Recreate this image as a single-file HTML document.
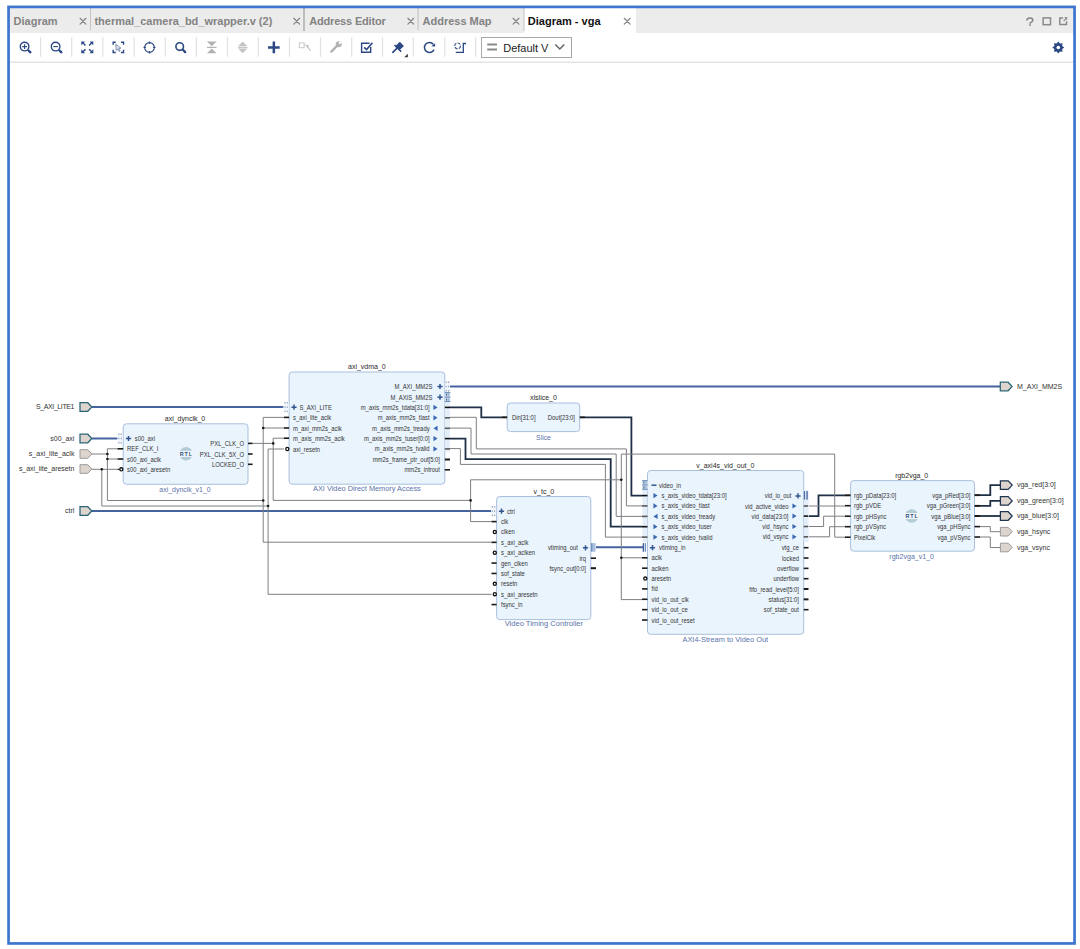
<!DOCTYPE html><html><head><meta charset="utf-8"><style>html,body{margin:0;padding:0;background:#fff;width:1080px;height:949px;overflow:hidden}svg{display:block;font-family:"Liberation Sans",sans-serif}</style></head><body>
<svg width="1080" height="949" viewBox="0 0 1080 949">
<rect x="0" y="0" width="1080" height="949" fill="#ffffff"/>
<rect x="9" y="8" width="1066" height="25" fill="#ececec"/>
<rect x="524" y="8" width="112" height="25" fill="#ffffff"/>
<rect x="9" y="61.5" width="1066" height="1.5" fill="#e4e4e4"/>
<text x="13.6" y="25" font-size="11" text-anchor="start" fill="#838383" font-weight="bold" >Diagram</text>
<text x="94.4" y="25" font-size="11" text-anchor="start" fill="#838383" font-weight="bold" >thermal_camera_bd_wrapper.v (2)</text>
<text x="309.2" y="25" font-size="11" text-anchor="start" fill="#838383" font-weight="bold" textLength="76.6">Address Editor</text>
<text x="422.5" y="25" font-size="11" text-anchor="start" fill="#838383" font-weight="bold" >Address Map</text>
<text x="527.8" y="25" font-size="11" text-anchor="start" fill="#111111" font-weight="bold" >Diagram - vga</text>
<path d="M80.1,18.3 L85.9,24.099999999999998 M85.9,18.3 L80.1,24.099999999999998" stroke="#838383" stroke-width="1.25" fill="none" stroke-linecap="round"/>
<path d="M293.8,18.3 L299.59999999999997,24.099999999999998 M299.59999999999997,18.3 L293.8,24.099999999999998" stroke="#838383" stroke-width="1.25" fill="none" stroke-linecap="round"/>
<path d="M407.90000000000003,18.3 L413.7,24.099999999999998 M413.7,18.3 L407.90000000000003,24.099999999999998" stroke="#838383" stroke-width="1.25" fill="none" stroke-linecap="round"/>
<path d="M513.1,18.3 L518.9,24.099999999999998 M518.9,18.3 L513.1,24.099999999999998" stroke="#838383" stroke-width="1.25" fill="none" stroke-linecap="round"/>
<path d="M624.3000000000001,18.3 L630.1,24.099999999999998 M630.1,18.3 L624.3000000000001,24.099999999999998" stroke="#838383" stroke-width="1.25" fill="none" stroke-linecap="round"/>
<rect x="90" y="8" width="1" height="22" fill="#c4c4c4"/>
<rect x="303" y="8" width="2" height="23" fill="#bdbdbd"/>
<rect x="417.4" y="8" width="1.3" height="22" fill="#c8c8c8"/>
<rect x="523.5" y="8" width="1" height="23" fill="#c4c4c4"/>
<path d="M1026.8,20.5 C1026.8,17.2 1032.8,17.2 1032.8,20.2 C1032.8,22.3 1030,22 1030,23.7" fill="none" stroke="#878787" stroke-width="1.6"/><rect x="1029.2" y="24.3" width="1.7" height="1.6" fill="#878787"/>
<rect x="1043.1" y="17.9" width="7.4" height="6.8" fill="none" stroke="#8a8a8a" stroke-width="1.5"/>
<path d="M1063.2,17.9 H1059.8 V24.6 H1066.5 V21.2" fill="none" stroke="#8a8a8a" stroke-width="1.5"/><path d="M1063.6,21.2 L1066.2,18.4" stroke="#8a8a8a" stroke-width="1.1"/><path d="M1067.2,17 L1067.2,20.2 L1064.2,17.2 Z" fill="#8a8a8a"/>
<rect x="40.0" y="37.2" width="1.2" height="19.6" fill="#e2e2e2"/>
<rect x="71.10000000000001" y="37.2" width="1.2" height="19.6" fill="#e2e2e2"/>
<rect x="102.2" y="37.2" width="1.2" height="19.6" fill="#e2e2e2"/>
<rect x="133.6" y="37.2" width="1.2" height="19.6" fill="#e2e2e2"/>
<rect x="164.70000000000002" y="37.2" width="1.2" height="19.6" fill="#e2e2e2"/>
<rect x="195.70000000000002" y="37.2" width="1.2" height="19.6" fill="#e2e2e2"/>
<rect x="226.9" y="37.2" width="1.2" height="19.6" fill="#e2e2e2"/>
<rect x="257.7" y="37.2" width="1.2" height="19.6" fill="#e2e2e2"/>
<rect x="288.9" y="37.2" width="1.2" height="19.6" fill="#e2e2e2"/>
<rect x="319.9" y="37.2" width="1.2" height="19.6" fill="#e2e2e2"/>
<rect x="351.09999999999997" y="37.2" width="1.2" height="19.6" fill="#e2e2e2"/>
<rect x="381.9" y="37.2" width="1.2" height="19.6" fill="#e2e2e2"/>
<rect x="412.7" y="37.2" width="1.2" height="19.6" fill="#e2e2e2"/>
<rect x="444.2" y="37.2" width="1.2" height="19.6" fill="#e2e2e2"/>
<rect x="475.09999999999997" y="37.2" width="1.2" height="19.6" fill="#e2e2e2"/>
<circle cx="24.6" cy="46.6" r="4.3" fill="none" stroke="#2b4883" stroke-width="1.4"/><path d="M22.3,46.6 H26.9 M24.6,44.3 V48.9" stroke="#2b4883" stroke-width="1.1"/><path d="M28.6,50.6 L30.4,52.3" stroke="#2b4883" stroke-width="2.3" stroke-linecap="round"/>
<circle cx="55.6" cy="46.6" r="4.3" fill="none" stroke="#2b4883" stroke-width="1.4"/><path d="M53.3,46.6 H57.9" stroke="#2b4883" stroke-width="1.1"/><path d="M59.6,50.6 L61.4,52.3" stroke="#2b4883" stroke-width="2.3" stroke-linecap="round"/>
<g stroke="#2b4883" stroke-width="1.4" fill="none"><path d="M82.8,42.85 L85.5,45.550000000000004 M91.8,42.85 L89.1,45.550000000000004 M82.8,51.85 L85.5,49.15 M91.8,51.85 L89.1,49.15"/></g>
<g fill="#2b4883"><path d="M81.3,41.550000000000004 h3.8 l-3.8,3.8z M93.3,41.550000000000004 h-3.8 l3.8,3.8z M81.3,53.15 h3.8 l-3.8,-3.8z M93.3,53.15 h-3.8 l3.8,-3.8z"/></g>
<path d="M113.14999999999999,44.85 V42.25 H115.75 M120.94999999999999,42.25 H123.55 V44.85 M123.55,49.85 V52.45 H120.94999999999999 M115.75,52.45 H113.14999999999999 V49.85" stroke="#2b4883" stroke-width="1.4" fill="none"/><path d="M115.75,44.15 L120.94999999999999,48.15 L118.75,48.45 L120.14999999999999,50.95 L119.14999999999999,51.45 L117.85,49.050000000000004 L116.14999999999999,50.35 Z" fill="#dde3ee" stroke="#5d7299" stroke-width="0.7"/>
<circle cx="149.5" cy="47.4" r="4.8" fill="none" stroke="#2b4883" stroke-width="1.1"/><path d="M149.5,41.4 V43.8 M149.5,51.0 V53.4 M143.5,47.4 H145.9 M153.1,47.4 H155.5" stroke="#2b4883" stroke-width="1.3"/>
<circle cx="179.7" cy="46.6" r="3.8" fill="none" stroke="#2b4883" stroke-width="1.6"/><path d="M182.9,49.8 L185.2,52.1" stroke="#2b4883" stroke-width="2.3" stroke-linecap="round"/>
<path d="M206.95,47.4 H216.55" stroke="#b3b3b3" stroke-width="1.2"/><path d="M206.95,41.6 H216.55 L211.75,46.2 Z M206.95,53.2 H216.55 L211.75,48.6 Z" fill="#b3b3b3"/>
<path d="M238.0,47.4 H247.39999999999998" stroke="#c8c8c8" stroke-width="1.2"/><path d="M238.0,46.3 H247.39999999999998 L242.7,41.6 Z M238.0,48.5 H247.39999999999998 L242.7,53.2 Z" fill="#c4c4c4"/>
<path d="M268.05,47.4 H279.65000000000003 M273.85,41.6 V53.199999999999996" stroke="#2b4883" stroke-width="2.5"/>
<rect x="299.3" y="42.9" width="4.8" height="4.8" fill="none" stroke="#c8c8c8" stroke-width="1"/><path d="M304.1,45.3 L306.3,44.9" stroke="#c8c8c8" stroke-width="1"/><path d="M306.5,45.5 L310.6,50.8" stroke="#bdbdbd" stroke-width="1.1"/><path d="M306.3,44.9 L309.2,45.6 L307.1,47.7 Z" fill="#bdbdbd"/>
<path d="M331.3,51.6 L337.5,45.4" stroke="#b3b3b3" stroke-width="2.4" stroke-linecap="round"/><circle cx="338.7" cy="44.2" r="3" fill="#b3b3b3"/><path d="M339.8,40.8 L341.6,42.6 L340.2,44.3 L338.4,43.3 Z" fill="#fff"/>
<path d="M369.5,43.2 H361.6 V52.2 H370.7 V47" fill="none" stroke="#2b4883" stroke-width="1.4"/><path d="M364.1,47.3 L366.6,49.6 L372.4,42.8" fill="none" stroke="#2b4883" stroke-width="1.6"/>
<path d="M392.8,52.4 L396.6,48.6" stroke="#2b4883" stroke-width="1.6" stroke-linecap="round"/><path d="M395,46.4 L399.8,41.8 L403.9,45.9 L399.2,50.6 Z" fill="#2b4883"/><path d="M394.5,45 L401.2,51.6" stroke="#2b4883" stroke-width="1.5"/><path d="M404.3,57.3 H407.8 V53.8 Z" fill="#333"/>
<path d="M433.3,44.2 A5,5 0 1 0 434,49.6" fill="none" stroke="#2b4883" stroke-width="1.5"/><path d="M435.2,43.2 L435.1,46.6 L431.3,46.2 Z" fill="#2b4883"/>
<circle cx="457.6" cy="45.9" r="2.9" fill="none" stroke="#3f5a8a" stroke-width="1.2" stroke-dasharray="3.2,1.2"/><path d="M455.8,52.4 H463.3 V43.5 H466" fill="none" stroke="#2b4883" stroke-width="1.3"/>
<rect x="481.5" y="37.5" width="90" height="20" fill="#fff" stroke="#a8a8a8" stroke-width="1"/>
<rect x="487.2" y="43.5" width="9.8" height="2" fill="#8a8a8a"/><rect x="487.2" y="48.5" width="9.8" height="2" fill="#8a8a8a"/>
<text x="503.2" y="52" font-size="11" text-anchor="start" fill="#222222" font-weight="normal" >Default V</text>
<path d="M555.3,44.5 L559.8,49 L564.3,44.5" fill="none" stroke="#666" stroke-width="1.5"/>
<path d="M1058.30,41.50 L1059.91,43.62 L1062.54,43.26 L1062.18,45.89 L1064.30,47.50 L1062.18,49.11 L1062.54,51.74 L1059.91,51.38 L1058.30,53.50 L1056.69,51.38 L1054.06,51.74 L1054.42,49.11 L1052.30,47.50 L1054.42,45.89 L1054.06,43.26 L1056.69,43.62 Z" fill="#2b4883"/><circle cx="1058.3" cy="47.5" r="1.8" fill="#fff"/>
<path d="M91.7,407.1 L283.4,407.1" fill="none" stroke="#44639f" stroke-width="2"/>
<path d="M450,386.4 L1000.3,386.4" fill="none" stroke="#44639f" stroke-width="2"/>
<path d="M91.7,438.5 L117.5,438.5" fill="none" stroke="#44639f" stroke-width="2"/>
<path d="M91.7,511.05 L491,511.05" fill="none" stroke="#44639f" stroke-width="2"/>
<path d="M596,547.3 L643,547.3" fill="none" stroke="#44639f" stroke-width="2"/>
<path d="M450,407.4 L481.3,407.4 L481.3,417.3 L502,417.3" fill="none" stroke="#1f2f45" stroke-width="1.8"/>
<path d="M450,438.6 L465.5,438.6 L465.5,459.1 L610.7,459.1 L610.7,526.7 L642,526.7" fill="none" stroke="#1f2f45" stroke-width="1.8"/>
<path d="M585,417.3 L631.4,417.3 L631.4,495.6 L642,495.6" fill="none" stroke="#1f2f45" stroke-width="1.8"/>
<path d="M808,516.1 L818.5,516.1 L818.5,495.3 L845,495.3" fill="none" stroke="#1f2f45" stroke-width="1.8"/>
<path d="M980,495.1 L990.3,495.1 L990.3,485.1 L1000.4,485.1" fill="none" stroke="#1f2f45" stroke-width="1.8"/>
<path d="M980,505.9 L990.3,505.9 L990.3,500.9 L1000.4,500.9" fill="none" stroke="#1f2f45" stroke-width="1.8"/>
<path d="M980,516 L1000.4,516" fill="none" stroke="#1f2f45" stroke-width="1.8"/>
<path d="M450,417.3 L476.3,417.3 L476.3,448.9 L626.4,448.9 L626.4,505.9 L642,505.9" fill="none" stroke="#7e7e84" stroke-width="1"/>
<path d="M450,428.1 L471,428.1 L471,454 L616.2,454 L616.2,516.4 L642,516.4" fill="none" stroke="#7e7e84" stroke-width="1"/>
<path d="M450,448.6 L460.4,448.6 L460.4,464.4 L605.4,464.4 L605.4,537.1 L642,537.1" fill="none" stroke="#7e7e84" stroke-width="1"/>
<path d="M808,506 L845,506" fill="none" stroke="#7e7e84" stroke-width="1"/>
<path d="M808,526.5 L823.6,526.5 L823.6,516.2 L845,516.2" fill="none" stroke="#7e7e84" stroke-width="1"/>
<path d="M808,536.8 L829.6,536.8 L829.6,526.7 L845,526.7" fill="none" stroke="#7e7e84" stroke-width="1"/>
<path d="M845,537.2 L834.7,537.2 L834.7,454.1 L621.3,454.1 L621.3,599.6 L642,599.6" fill="none" stroke="#7e7e84" stroke-width="1"/>
<path d="M470.6,479.8 L621.3,479.8" fill="none" stroke="#7e7e84" stroke-width="1"/>
<path d="M470.6,479.8 L470.6,521.6 L491.5,521.6" fill="none" stroke="#7e7e84" stroke-width="1"/>
<path d="M621.3,557.8 L642,557.8" fill="none" stroke="#7e7e84" stroke-width="1"/>
<path d="M980,526.6 L990.3,526.6 L990.3,531.7 L1000.4,531.7" fill="none" stroke="#7e7e84" stroke-width="1"/>
<path d="M980,537 L990.3,537 L990.3,547.5 L1000.4,547.5" fill="none" stroke="#7e7e84" stroke-width="1"/>
<path d="M91.7,454 L107.4,454" fill="none" stroke="#7e7e84" stroke-width="1"/>
<path d="M117.5,448.8 L107.4,448.8 L107.4,500.5 L263.2,500.5" fill="none" stroke="#7e7e84" stroke-width="1"/>
<path d="M107.4,459 L117.5,459" fill="none" stroke="#7e7e84" stroke-width="1"/>
<path d="M91.7,469.3 L117.5,469.3" fill="none" stroke="#7e7e84" stroke-width="1"/>
<path d="M101.8,469.3 L101.8,506 L268.1,506" fill="none" stroke="#7e7e84" stroke-width="1"/>
<path d="M284,417.4 L263.2,417.4 L263.2,542.2 L491.5,542.2" fill="none" stroke="#7e7e84" stroke-width="1"/>
<path d="M263.2,428 L284,428" fill="none" stroke="#7e7e84" stroke-width="1"/>
<path d="M284,449 L268.1,449 L268.1,594.3 L491.5,594.3" fill="none" stroke="#7e7e84" stroke-width="1"/>
<path d="M284,438.2 L273.2,438.2 L273.2,500.4 L470.6,500.4" fill="none" stroke="#7e7e84" stroke-width="1"/>
<path d="M252.6,443.4 L273.2,443.4" fill="none" stroke="#7e7e84" stroke-width="1"/>
<circle cx="107.4" cy="454" r="1.3" fill="#1a1a1a"/>
<circle cx="107.4" cy="459" r="1.3" fill="#1a1a1a"/>
<circle cx="101.8" cy="469.3" r="1.3" fill="#1a1a1a"/>
<circle cx="263.2" cy="500.5" r="1.3" fill="#1a1a1a"/>
<circle cx="268.1" cy="506" r="1.3" fill="#1a1a1a"/>
<circle cx="263.2" cy="428" r="1.3" fill="#1a1a1a"/>
<circle cx="273.2" cy="443.4" r="1.3" fill="#1a1a1a"/>
<circle cx="470.6" cy="500.4" r="1.3" fill="#1a1a1a"/>
<circle cx="621.3" cy="479.8" r="1.3" fill="#1a1a1a"/>
<circle cx="621.3" cy="557.8" r="1.3" fill="#1a1a1a"/>
<path d="M80.00,402.70 L87.80,402.70 L91.80,407.00 L87.80,411.30 L80.00,411.30 Z" fill="#ddd4cd" stroke="#2c6577" stroke-width="1.25"/>
<text x="74.4" y="409.3" font-size="7" text-anchor="end" fill="#333333" font-weight="normal" textLength="38.3">S_AXI_LITE1</text>
<path d="M80.00,434.20 L87.80,434.20 L91.80,438.50 L87.80,442.80 L80.00,442.80 Z" fill="#ddd4cd" stroke="#2c6577" stroke-width="1.25"/>
<text x="74.4" y="440.8" font-size="7" text-anchor="end" fill="#333333" font-weight="normal" >s00_axi</text>
<path d="M80.00,449.70 L87.80,449.70 L91.80,454.00 L87.80,458.30 L80.00,458.30 Z" fill="#ddd4cd" stroke="#9a9a9a" stroke-width="1"/>
<text x="74.4" y="456.3" font-size="7" text-anchor="end" fill="#333333" font-weight="normal" >s_axi_lite_aclk</text>
<path d="M80.00,464.70 L87.80,464.70 L91.80,469.00 L87.80,473.30 L80.00,473.30 Z" fill="#ddd4cd" stroke="#9a9a9a" stroke-width="1"/>
<text x="74.4" y="471.3" font-size="7" text-anchor="end" fill="#333333" font-weight="normal" textLength="55.5">s_axi_lite_aresetn</text>
<path d="M80.00,506.70 L87.80,506.70 L91.80,511.00 L87.80,515.30 L80.00,515.30 Z" fill="#ddd4cd" stroke="#2c6577" stroke-width="1.25"/>
<text x="74.4" y="513.3" font-size="7" text-anchor="end" fill="#333333" font-weight="normal" >ctrl</text>
<path d="M1000.30,382.20 L1008.10,382.20 L1012.10,386.50 L1008.10,390.80 L1000.30,390.80 Z" fill="#ddd4cd" stroke="#2c6577" stroke-width="1.25"/>
<text x="1017" y="388.8" font-size="7" text-anchor="start" fill="#333333" font-weight="normal" >M_AXI_MM2S</text>
<path d="M1000.40,480.80 L1008.20,480.80 L1012.20,485.10 L1008.20,489.40 L1000.40,489.40 Z" fill="#ddd4cd" stroke="#1f3550" stroke-width="1.25"/>
<text x="1016.9" y="487.4" font-size="7" text-anchor="start" fill="#333333" font-weight="normal" >vga_red[3:0]</text>
<path d="M1000.40,496.60 L1008.20,496.60 L1012.20,500.90 L1008.20,505.20 L1000.40,505.20 Z" fill="#ddd4cd" stroke="#1f3550" stroke-width="1.25"/>
<text x="1016.9" y="503.2" font-size="7" text-anchor="start" fill="#333333" font-weight="normal" >vga_green[3:0]</text>
<path d="M1000.40,511.70 L1008.20,511.70 L1012.20,516.00 L1008.20,520.30 L1000.40,520.30 Z" fill="#ddd4cd" stroke="#1f3550" stroke-width="1.25"/>
<text x="1016.9" y="518.3" font-size="7" text-anchor="start" fill="#333333" font-weight="normal" >vga_blue[3:0]</text>
<path d="M1000.40,527.40 L1008.20,527.40 L1012.20,531.70 L1008.20,536.00 L1000.40,536.00 Z" fill="#ddd4cd" stroke="#9a9a9a" stroke-width="1"/>
<text x="1016.9" y="534" font-size="7" text-anchor="start" fill="#333333" font-weight="normal" >vga_hsync</text>
<path d="M1000.40,543.20 L1008.20,543.20 L1012.20,547.50 L1008.20,551.80 L1000.40,551.80 Z" fill="#ddd4cd" stroke="#9a9a9a" stroke-width="1"/>
<text x="1016.9" y="549.8" font-size="7" text-anchor="start" fill="#333333" font-weight="normal" >vga_vsync</text>
<rect x="123.2" y="423.8" width="124.8" height="60.5" rx="3.2" ry="3.2" fill="#eaf4fd" stroke="#a9c0dd" stroke-width="1"/>
<text x="185" y="421.3" font-size="7" text-anchor="middle" fill="#2a2a2a" font-weight="normal" >axi_dynclk_0</text>
<text x="185" y="491.5" font-size="7.4" text-anchor="middle" fill="#5a73aa" font-weight="normal" textLength="51.4" lengthAdjust="spacingAndGlyphs">axi_dynclk_v1_0</text>
<rect x="117.7" y="433.5" width="5" height="10" fill="#f1f6fc"/>
<rect x="118.35000000000001" y="433.5" width="1.1" height="1.4" fill="#8d9db6"/>
<rect x="118.35000000000001" y="437.8" width="1.1" height="1.4" fill="#8d9db6"/>
<rect x="118.35000000000001" y="442.1" width="1.1" height="1.4" fill="#8d9db6"/>
<rect x="120.65" y="433.5" width="1.1" height="1.4" fill="#8d9db6"/>
<rect x="120.65" y="437.8" width="1.1" height="1.4" fill="#8d9db6"/>
<rect x="120.65" y="442.1" width="1.1" height="1.4" fill="#8d9db6"/>
<path d="M125.9,438.5 H131.1 M128.5,435.9 V441.1" stroke="#34568f" stroke-width="1.5" fill="none"/>
<text x="134.8" y="441.0" font-size="6.5" text-anchor="start" fill="#333333" font-weight="normal"  textLength="20.27" lengthAdjust="spacingAndGlyphs">s00_axi</text>
<text x="127" y="451.3" font-size="6.5" text-anchor="start" fill="#333333" font-weight="normal"  textLength="31.37" lengthAdjust="spacingAndGlyphs">REF_CLK_I</text>
<text x="127" y="461.5" font-size="6.5" text-anchor="start" fill="#333333" font-weight="normal"  textLength="33.99" lengthAdjust="spacingAndGlyphs">s00_axi_aclk</text>
<text x="127" y="471.8" font-size="6.5" text-anchor="start" fill="#333333" font-weight="normal"  textLength="43.15" lengthAdjust="spacingAndGlyphs">s00_axi_aresetn</text>
<line x1="117.5" y1="448.8" x2="123.2" y2="448.8" stroke="#1a1a1a" stroke-width="1.6"/>
<line x1="117.5" y1="459" x2="123.2" y2="459" stroke="#1a1a1a" stroke-width="1.6"/>
<circle cx="121.3" cy="469.3" r="1.55" fill="#fff" stroke="#111" stroke-width="1.3"/>
<line x1="117.5" y1="469.3" x2="119" y2="469.3" stroke="#1a1a1a" stroke-width="1.2"/>
<circle cx="186" cy="453.8" r="6.7" fill="#b3cbd6"/>
<rect x="179" y="450.8" width="14" height="6.1" fill="#eef6fb"/>
<text x="179.8" y="455.90000000000003" font-size="5.4" fill="#34507e" font-weight="bold" textLength="12.3" lengthAdjust="spacing">RTL</text>
<text x="244" y="445.9" font-size="6.5" text-anchor="end" fill="#333333" font-weight="normal"  textLength="33.67" lengthAdjust="spacingAndGlyphs">PXL_CLK_O</text>
<line x1="248" y1="443.4" x2="252.6" y2="443.4" stroke="#1a1a1a" stroke-width="1.6"/>
<text x="244" y="456.5" font-size="6.5" text-anchor="end" fill="#333333" font-weight="normal"  textLength="44.13" lengthAdjust="spacingAndGlyphs">PXL_CLK_5X_O</text>
<line x1="248" y1="454" x2="252.6" y2="454" stroke="#1a1a1a" stroke-width="1.6"/>
<text x="244" y="466.8" font-size="6.5" text-anchor="end" fill="#333333" font-weight="normal"  textLength="32.02" lengthAdjust="spacingAndGlyphs">LOCKED_O</text>
<line x1="248" y1="464.3" x2="252.6" y2="464.3" stroke="#1a1a1a" stroke-width="1.6"/>
<rect x="289.1" y="372" width="155.7" height="112.19999999999999" rx="3.2" ry="3.2" fill="#eaf4fd" stroke="#a9c0dd" stroke-width="1"/>
<text x="366.9" y="369.3" font-size="7" text-anchor="middle" fill="#2a2a2a" font-weight="normal" >axi_vdma_0</text>
<text x="366.9" y="491.3" font-size="7.4" text-anchor="middle" fill="#5a73aa" font-weight="normal" textLength="107.8" lengthAdjust="spacingAndGlyphs">AXI Video Direct Memory Access</text>
<rect x="283.8" y="402.1" width="5" height="10" fill="#f1f6fc"/>
<rect x="284.45" y="402.1" width="1.1" height="1.4" fill="#8d9db6"/>
<rect x="284.45" y="406.40000000000003" width="1.1" height="1.4" fill="#8d9db6"/>
<rect x="284.45" y="410.70000000000005" width="1.1" height="1.4" fill="#8d9db6"/>
<rect x="286.75" y="402.1" width="1.1" height="1.4" fill="#8d9db6"/>
<rect x="286.75" y="406.40000000000003" width="1.1" height="1.4" fill="#8d9db6"/>
<rect x="286.75" y="410.70000000000005" width="1.1" height="1.4" fill="#8d9db6"/>
<path d="M291.4,407.2 H296.6 M294,404.59999999999997 V409.8" stroke="#34568f" stroke-width="1.5" fill="none"/>
<text x="299.5" y="409.7" font-size="6.5" text-anchor="start" fill="#333333" font-weight="normal"  textLength="32.36" lengthAdjust="spacingAndGlyphs">S_AXI_LITE</text>
<text x="293" y="419.9" font-size="6.5" text-anchor="start" fill="#333333" font-weight="normal"  textLength="38.24" lengthAdjust="spacingAndGlyphs">s_axi_lite_aclk</text>
<line x1="284" y1="417.4" x2="289.1" y2="417.4" stroke="#1a1a1a" stroke-width="1.6"/>
<text x="293" y="430.5" font-size="6.5" text-anchor="start" fill="#333333" font-weight="normal"  textLength="48.69" lengthAdjust="spacingAndGlyphs">m_axi_mm2s_aclk</text>
<line x1="284" y1="428" x2="289.1" y2="428" stroke="#1a1a1a" stroke-width="1.6"/>
<text x="293" y="440.7" font-size="6.5" text-anchor="start" fill="#333333" font-weight="normal"  textLength="51.63" lengthAdjust="spacingAndGlyphs">m_axis_mm2s_aclk</text>
<line x1="284" y1="438.2" x2="289.1" y2="438.2" stroke="#1a1a1a" stroke-width="1.6"/>
<text x="293" y="451.5" font-size="6.5" text-anchor="start" fill="#333333" font-weight="normal"  textLength="27.13" lengthAdjust="spacingAndGlyphs">axi_resetn</text>
<circle cx="287.3" cy="449" r="1.55" fill="#fff" stroke="#111" stroke-width="1.3"/>
<rect x="445.0" y="381.5" width="5" height="10" fill="#f1f6fc"/>
<rect x="445.65" y="381.5" width="1.1" height="1.4" fill="#8d9db6"/>
<rect x="445.65" y="385.8" width="1.1" height="1.4" fill="#8d9db6"/>
<rect x="445.65" y="390.1" width="1.1" height="1.4" fill="#8d9db6"/>
<rect x="447.95" y="381.5" width="1.1" height="1.4" fill="#8d9db6"/>
<rect x="447.95" y="385.8" width="1.1" height="1.4" fill="#8d9db6"/>
<rect x="447.95" y="390.1" width="1.1" height="1.4" fill="#8d9db6"/>
<rect x="444.9" y="392.2" width="5.4" height="9.800000000000011" fill="#d3e0ef"/>
<rect x="444.9" y="392.09999999999997" width="5.4" height="1.2" fill="#6f8fba"/>
<rect x="444.9" y="396.5" width="5.4" height="1.2" fill="#6f8fba"/>
<rect x="444.9" y="400.9" width="5.4" height="1.2" fill="#6f8fba"/>
<rect x="446.09999999999997" y="393.65" width="1.1" height="2" fill="#3f5f8f"/><rect x="448.09999999999997" y="393.65" width="1.1" height="2" fill="#8aa4c8"/>
<rect x="446.09999999999997" y="398.55" width="1.1" height="2" fill="#3f5f8f"/><rect x="448.09999999999997" y="398.55" width="1.1" height="2" fill="#8aa4c8"/>
<rect x="444.8" y="402" width="5" height="50" fill="#e4eef9"/>
<path d="M437.4,386.5 H442.6 M440,383.9 V389.1" stroke="#34568f" stroke-width="1.5" fill="none"/>
<text x="432.4" y="389.0" font-size="6.5" text-anchor="end" fill="#333333" font-weight="normal"  textLength="37.90" lengthAdjust="spacingAndGlyphs">M_AXI_MM2S</text>
<path d="M437.4,397.2 H442.6 M440,394.59999999999997 V399.8" stroke="#34568f" stroke-width="1.5" fill="none"/>
<text x="432.4" y="399.7" font-size="6.5" text-anchor="end" fill="#333333" font-weight="normal"  textLength="41.83" lengthAdjust="spacingAndGlyphs">M_AXIS_MM2S</text>
<text x="429.6" y="409.9" font-size="6.5" text-anchor="end" fill="#333333" font-weight="normal"  textLength="68.96" lengthAdjust="spacingAndGlyphs">m_axis_mm2s_tdata[31:0]</text>
<path d="M433.42,404.79999999999995 L437.58,407.4 L433.42,410.0 Z" fill="#3b68b0"/>
<line x1="444.8" y1="407.4" x2="450" y2="407.4" stroke="#111" stroke-width="1.6"/>
<text x="429.6" y="420.3" font-size="6.5" text-anchor="end" fill="#333333" font-weight="normal"  textLength="51.96" lengthAdjust="spacingAndGlyphs">m_axis_mm2s_tlast</text>
<path d="M433.42,415.2 L437.58,417.8 L433.42,420.40000000000003 Z" fill="#3b68b0"/>
<line x1="444.8" y1="417.8" x2="450" y2="417.8" stroke="#5a5a5a" stroke-width="1.6"/>
<text x="429.6" y="430.8" font-size="6.5" text-anchor="end" fill="#333333" font-weight="normal"  textLength="57.51" lengthAdjust="spacingAndGlyphs">m_axis_mm2s_tready</text>
<path d="M437.58,425.7 L433.42,428.3 L437.58,430.90000000000003 Z" fill="#3b68b0"/>
<line x1="444.8" y1="428.3" x2="450" y2="428.3" stroke="#5a5a5a" stroke-width="1.6"/>
<text x="429.6" y="441.1" font-size="6.5" text-anchor="end" fill="#333333" font-weight="normal"  textLength="65.68" lengthAdjust="spacingAndGlyphs">m_axis_mm2s_tuser[0:0]</text>
<path d="M433.42,436.0 L437.58,438.6 L433.42,441.20000000000005 Z" fill="#3b68b0"/>
<line x1="444.8" y1="438.6" x2="450" y2="438.6" stroke="#111" stroke-width="1.6"/>
<text x="429.6" y="451.4" font-size="6.5" text-anchor="end" fill="#333333" font-weight="normal"  textLength="54.90" lengthAdjust="spacingAndGlyphs">m_axis_mm2s_tvalid</text>
<path d="M433.42,446.29999999999995 L437.58,448.9 L433.42,451.5 Z" fill="#3b68b0"/>
<line x1="444.8" y1="448.9" x2="450" y2="448.9" stroke="#5a5a5a" stroke-width="1.6"/>
<text x="440" y="462.0" font-size="6.5" text-anchor="end" fill="#333333" font-weight="normal"  textLength="67.32" lengthAdjust="spacingAndGlyphs">mm2s_frame_ptr_out[5:0]</text>
<line x1="444.8" y1="459.5" x2="450" y2="459.5" stroke="#1a1a1a" stroke-width="2"/>
<text x="440" y="472.3" font-size="6.5" text-anchor="end" fill="#333333" font-weight="normal"  textLength="35.62" lengthAdjust="spacingAndGlyphs">mm2s_introut</text>
<line x1="444.8" y1="469.8" x2="450" y2="469.8" stroke="#1a1a1a" stroke-width="1.6"/>
<rect x="507.2" y="403" width="72.50000000000006" height="28.600000000000023" rx="3.2" ry="3.2" fill="#eaf4fd" stroke="#a9c0dd" stroke-width="1"/>
<text x="543.5" y="399.5" font-size="7" text-anchor="middle" fill="#2a2a2a" font-weight="normal" >xlslice_0</text>
<text x="543.5" y="439.7" font-size="7.4" text-anchor="middle" fill="#5a73aa" font-weight="normal" textLength="14.9" lengthAdjust="spacingAndGlyphs">Slice</text>
<text x="512" y="419.79999999999995" font-size="6.5" text-anchor="start" fill="#333333" font-weight="normal"  textLength="23.53" lengthAdjust="spacingAndGlyphs">Din[31:0]</text>
<line x1="502" y1="417.3" x2="507.2" y2="417.3" stroke="#1a1a1a" stroke-width="2"/>
<text x="575" y="419.79999999999995" font-size="6.5" text-anchor="end" fill="#333333" font-weight="normal"  textLength="27.13" lengthAdjust="spacingAndGlyphs">Dout[23:0]</text>
<line x1="579.7" y1="417.3" x2="585" y2="417.3" stroke="#1a1a1a" stroke-width="2"/>
<rect x="496.6" y="496.5" width="94.19999999999993" height="123.10000000000002" rx="3.2" ry="3.2" fill="#eaf4fd" stroke="#a9c0dd" stroke-width="1"/>
<text x="543.9" y="493.5" font-size="7" text-anchor="middle" fill="#2a2a2a" font-weight="normal" >v_tc_0</text>
<text x="543.9" y="626.3" font-size="7.4" text-anchor="middle" fill="#5a73aa" font-weight="normal" textLength="78.4" lengthAdjust="spacingAndGlyphs">Video Timing Controller</text>
<rect x="491.1" y="506.1" width="5" height="10" fill="#f1f6fc"/>
<rect x="491.75" y="506.1" width="1.1" height="1.4" fill="#8d9db6"/>
<rect x="491.75" y="510.40000000000003" width="1.1" height="1.4" fill="#8d9db6"/>
<rect x="491.75" y="514.6999999999999" width="1.1" height="1.4" fill="#8d9db6"/>
<rect x="494.05" y="506.1" width="1.1" height="1.4" fill="#8d9db6"/>
<rect x="494.05" y="510.40000000000003" width="1.1" height="1.4" fill="#8d9db6"/>
<rect x="494.05" y="514.6999999999999" width="1.1" height="1.4" fill="#8d9db6"/>
<path d="M498.9,511.2 H504.1 M501.5,508.59999999999997 V513.8" stroke="#34568f" stroke-width="1.5" fill="none"/>
<text x="507" y="513.6999999999999" font-size="6.5" text-anchor="start" fill="#333333" font-weight="normal"  textLength="7.84" lengthAdjust="spacingAndGlyphs">ctrl</text>
<text x="501" y="524.1" font-size="6.5" text-anchor="start" fill="#333333" font-weight="normal"  textLength="7.19" lengthAdjust="spacingAndGlyphs">clk</text>
<line x1="491.5" y1="521.6" x2="496.6" y2="521.6" stroke="#1a1a1a" stroke-width="1.6"/>
<text x="501" y="534.47" font-size="6.5" text-anchor="start" fill="#333333" font-weight="normal"  textLength="13.73" lengthAdjust="spacingAndGlyphs">clken</text>
<circle cx="494.8" cy="531.97" r="1.55" fill="#fff" stroke="#111" stroke-width="1.3"/>
<text x="501" y="544.84" font-size="6.5" text-anchor="start" fill="#333333" font-weight="normal"  textLength="27.45" lengthAdjust="spacingAndGlyphs">s_axi_aclk</text>
<line x1="491.5" y1="542.34" x2="496.6" y2="542.34" stroke="#1a1a1a" stroke-width="1.6"/>
<text x="501" y="555.21" font-size="6.5" text-anchor="start" fill="#333333" font-weight="normal"  textLength="33.99" lengthAdjust="spacingAndGlyphs">s_axi_aclken</text>
<circle cx="494.8" cy="552.71" r="1.55" fill="#fff" stroke="#111" stroke-width="1.3"/>
<text x="501" y="565.58" font-size="6.5" text-anchor="start" fill="#333333" font-weight="normal"  textLength="26.81" lengthAdjust="spacingAndGlyphs">gen_clken</text>
<line x1="491.5" y1="563.08" x2="496.6" y2="563.08" stroke="#1a1a1a" stroke-width="1.6"/>
<text x="501" y="575.95" font-size="6.5" text-anchor="start" fill="#333333" font-weight="normal"  textLength="23.86" lengthAdjust="spacingAndGlyphs">sof_state</text>
<line x1="491.5" y1="573.45" x2="496.6" y2="573.45" stroke="#1a1a1a" stroke-width="1.6"/>
<text x="501" y="586.32" font-size="6.5" text-anchor="start" fill="#333333" font-weight="normal"  textLength="16.34" lengthAdjust="spacingAndGlyphs">resetn</text>
<circle cx="494.8" cy="583.82" r="1.55" fill="#fff" stroke="#111" stroke-width="1.3"/>
<text x="501" y="596.69" font-size="6.5" text-anchor="start" fill="#333333" font-weight="normal"  textLength="36.61" lengthAdjust="spacingAndGlyphs">s_axi_aresetn</text>
<circle cx="494.8" cy="594.19" r="1.55" fill="#fff" stroke="#111" stroke-width="1.3"/>
<text x="501" y="607.0600000000001" font-size="6.5" text-anchor="start" fill="#333333" font-weight="normal"  textLength="21.57" lengthAdjust="spacingAndGlyphs">fsync_in</text>
<line x1="491.5" y1="604.5600000000001" x2="496.6" y2="604.5600000000001" stroke="#1a1a1a" stroke-width="1.6"/>
<rect x="591.6" y="543.1" width="4" height="8.6" fill="#a9c0df"/><rect x="591.3" y="543.1" width="0.9" height="8.6" fill="#4f6fa8"/>
<path d="M582.9,547.8 H588.1 M585.5,545.1999999999999 V550.4" stroke="#34568f" stroke-width="1.5" fill="none"/>
<text x="578" y="550.3" font-size="6.5" text-anchor="end" fill="#333333" font-weight="normal"  textLength="30.07" lengthAdjust="spacingAndGlyphs">vtiming_out</text>
<text x="586" y="560.6999999999999" font-size="6.5" text-anchor="end" fill="#333333" font-weight="normal"  textLength="6.53" lengthAdjust="spacingAndGlyphs">irq</text>
<line x1="590.8" y1="558.2" x2="596" y2="558.2" stroke="#1a1a1a" stroke-width="1.6"/>
<text x="586" y="570.6999999999999" font-size="6.5" text-anchor="end" fill="#333333" font-weight="normal"  textLength="36.61" lengthAdjust="spacingAndGlyphs">fsync_out[0:0]</text>
<line x1="590.8" y1="568.2" x2="596" y2="568.2" stroke="#1a1a1a" stroke-width="2"/>
<rect x="647.5" y="470.5" width="156.20000000000005" height="163.79999999999995" rx="3.2" ry="3.2" fill="#eaf4fd" stroke="#a9c0dd" stroke-width="1"/>
<text x="725.3" y="467.8" font-size="7" text-anchor="middle" fill="#2a2a2a" font-weight="normal" >v_axi4s_vid_out_0</text>
<text x="725.3" y="642" font-size="7.4" text-anchor="middle" fill="#5a73aa" font-weight="normal" textLength="85.7" lengthAdjust="spacingAndGlyphs">AXI4-Stream to Video Out</text>
<rect x="642.5" y="480" width="5" height="62" fill="#e4eef9"/>
<rect x="642.2" y="480.2" width="5.4" height="9.5" fill="#d3e0ef"/>
<rect x="642.2" y="480.09999999999997" width="5.4" height="1.2" fill="#6f8fba"/>
<rect x="642.2" y="484.34999999999997" width="5.4" height="1.2" fill="#6f8fba"/>
<rect x="642.2" y="488.59999999999997" width="5.4" height="1.2" fill="#6f8fba"/>
<rect x="643.4000000000001" y="481.575" width="1.1" height="2" fill="#3f5f8f"/><rect x="645.4000000000001" y="481.575" width="1.1" height="2" fill="#8aa4c8"/>
<rect x="643.4000000000001" y="486.325" width="1.1" height="2" fill="#3f5f8f"/><rect x="645.4000000000001" y="486.325" width="1.1" height="2" fill="#8aa4c8"/>
<rect x="642.7" y="543.1" width="1.3" height="8.6" fill="#3f5f9c"/><rect x="644.7" y="543.1" width="1.3" height="8.6" fill="#6f8cc0"/>
<path d="M651.5,485.2 H656.5" stroke="#34568f" stroke-width="1.5"/>
<text x="659" y="487.7" font-size="6.5" text-anchor="start" fill="#333333" font-weight="normal"  textLength="21.90" lengthAdjust="spacingAndGlyphs">video_in</text>
<path d="M653.42,493.0 L657.58,495.6 L653.42,498.20000000000005 Z" fill="#3b68b0"/>
<text x="661.5" y="498.1" font-size="6.5" text-anchor="start" fill="#333333" font-weight="normal"  textLength="65.05" lengthAdjust="spacingAndGlyphs">s_axis_video_tdata[23:0]</text>
<line x1="642" y1="495.6" x2="647.5" y2="495.6" stroke="#111" stroke-width="1.6"/>
<path d="M653.42,503.29999999999995 L657.58,505.9 L653.42,508.5 Z" fill="#3b68b0"/>
<text x="661.5" y="508.4" font-size="6.5" text-anchor="start" fill="#333333" font-weight="normal"  textLength="48.05" lengthAdjust="spacingAndGlyphs">s_axis_video_tlast</text>
<line x1="642" y1="505.9" x2="647.5" y2="505.9" stroke="#555" stroke-width="1.6"/>
<path d="M657.58,513.8 L653.42,516.4 L657.58,519.0 Z" fill="#3b68b0"/>
<text x="661.5" y="518.9" font-size="6.5" text-anchor="start" fill="#333333" font-weight="normal"  textLength="53.61" lengthAdjust="spacingAndGlyphs">s_axis_video_tready</text>
<line x1="642" y1="516.4" x2="647.5" y2="516.4" stroke="#555" stroke-width="1.6"/>
<path d="M653.42,524.1 L657.58,526.7 L653.42,529.3000000000001 Z" fill="#3b68b0"/>
<text x="661.5" y="529.2" font-size="6.5" text-anchor="start" fill="#333333" font-weight="normal"  textLength="50.34" lengthAdjust="spacingAndGlyphs">s_axis_video_tuser</text>
<line x1="642" y1="526.7" x2="647.5" y2="526.7" stroke="#111" stroke-width="1.6"/>
<path d="M653.42,534.5 L657.58,537.1 L653.42,539.7 Z" fill="#3b68b0"/>
<text x="661.5" y="539.6" font-size="6.5" text-anchor="start" fill="#333333" font-weight="normal"  textLength="50.99" lengthAdjust="spacingAndGlyphs">s_axis_video_tvalid</text>
<line x1="642" y1="537.1" x2="647.5" y2="537.1" stroke="#555" stroke-width="1.6"/>
<path d="M649.9,547.7 H655.1 M652.5,545.1 V550.3000000000001" stroke="#34568f" stroke-width="1.5" fill="none"/>
<text x="659" y="550.1999999999999" font-size="6.5" text-anchor="start" fill="#333333" font-weight="normal"  textLength="26.47" lengthAdjust="spacingAndGlyphs">vtiming_in</text>
<text x="651.5" y="560.3" font-size="6.5" text-anchor="start" fill="#333333" font-weight="normal"  textLength="10.46" lengthAdjust="spacingAndGlyphs">aclk</text>
<line x1="642" y1="557.8" x2="647.5" y2="557.8" stroke="#1a1a1a" stroke-width="1.6"/>
<text x="651.5" y="570.67" font-size="6.5" text-anchor="start" fill="#333333" font-weight="normal"  textLength="17.00" lengthAdjust="spacingAndGlyphs">aclken</text>
<line x1="642" y1="568.17" x2="647.5" y2="568.17" stroke="#1a1a1a" stroke-width="1.6"/>
<text x="651.5" y="581.04" font-size="6.5" text-anchor="start" fill="#333333" font-weight="normal"  textLength="19.61" lengthAdjust="spacingAndGlyphs">aresetn</text>
<circle cx="645.3" cy="578.54" r="1.55" fill="#fff" stroke="#111" stroke-width="1.3"/>
<text x="651.5" y="591.41" font-size="6.5" text-anchor="start" fill="#333333" font-weight="normal"  textLength="6.21" lengthAdjust="spacingAndGlyphs">fid</text>
<line x1="642" y1="588.91" x2="647.5" y2="588.91" stroke="#1a1a1a" stroke-width="1.6"/>
<text x="651.5" y="601.78" font-size="6.5" text-anchor="start" fill="#333333" font-weight="normal"  textLength="37.26" lengthAdjust="spacingAndGlyphs">vid_io_out_clk</text>
<line x1="642" y1="599.28" x2="647.5" y2="599.28" stroke="#1a1a1a" stroke-width="1.6"/>
<text x="651.5" y="612.15" font-size="6.5" text-anchor="start" fill="#333333" font-weight="normal"  textLength="36.29" lengthAdjust="spacingAndGlyphs">vid_io_out_ce</text>
<line x1="642" y1="609.65" x2="647.5" y2="609.65" stroke="#1a1a1a" stroke-width="1.6"/>
<text x="651.5" y="622.52" font-size="6.5" text-anchor="start" fill="#333333" font-weight="normal"  textLength="43.15" lengthAdjust="spacingAndGlyphs">vid_io_out_reset</text>
<line x1="642" y1="620.02" x2="647.5" y2="620.02" stroke="#1a1a1a" stroke-width="1.6"/>
<rect x="803.7" y="490" width="5" height="52" fill="#e4eef9"/>
<rect x="803.8" y="491.1" width="1.3" height="8.5" fill="#4f6fa8"/><rect x="806.4" y="491.1" width="1.3" height="8.5" fill="#3f5f9c"/>
<path d="M795.4,495.9 H800.6 M798,493.29999999999995 V498.5" stroke="#34568f" stroke-width="1.5" fill="none"/>
<text x="791.5" y="498.4" font-size="6.5" text-anchor="end" fill="#333333" font-weight="normal"  textLength="26.81" lengthAdjust="spacingAndGlyphs">vid_io_out</text>
<path d="M792.42,503.4 L796.58,506 L792.42,508.6 Z" fill="#3b68b0"/>
<text x="788.5" y="508.5" font-size="6.5" text-anchor="end" fill="#333333" font-weight="normal"  textLength="43.47" lengthAdjust="spacingAndGlyphs">vid_active_video</text>
<line x1="803.7" y1="506" x2="808" y2="506" stroke="#555" stroke-width="1.6"/>
<path d="M792.42,513.5 L796.58,516.1 L792.42,518.7 Z" fill="#3b68b0"/>
<text x="788.5" y="518.6" font-size="6.5" text-anchor="end" fill="#333333" font-weight="normal"  textLength="36.94" lengthAdjust="spacingAndGlyphs">vid_data[23:0]</text>
<line x1="803.7" y1="516.1" x2="808" y2="516.1" stroke="#111" stroke-width="1.6"/>
<path d="M792.42,523.9 L796.58,526.5 L792.42,529.1 Z" fill="#3b68b0"/>
<text x="788.5" y="529.0" font-size="6.5" text-anchor="end" fill="#333333" font-weight="normal"  textLength="26.15" lengthAdjust="spacingAndGlyphs">vid_hsync</text>
<line x1="803.7" y1="526.5" x2="808" y2="526.5" stroke="#555" stroke-width="1.6"/>
<path d="M792.42,534.1999999999999 L796.58,536.8 L792.42,539.4 Z" fill="#3b68b0"/>
<text x="788.5" y="539.3" font-size="6.5" text-anchor="end" fill="#333333" font-weight="normal"  textLength="25.82" lengthAdjust="spacingAndGlyphs">vid_vsync</text>
<line x1="803.7" y1="536.8" x2="808" y2="536.8" stroke="#555" stroke-width="1.6"/>
<text x="799" y="550.2" font-size="6.5" text-anchor="end" fill="#333333" font-weight="normal"  textLength="17.32" lengthAdjust="spacingAndGlyphs">vtg_ce</text>
<line x1="803.7" y1="547.7" x2="808.5" y2="547.7" stroke="#1a1a1a" stroke-width="1.6"/>
<text x="799" y="560.5300000000001" font-size="6.5" text-anchor="end" fill="#333333" font-weight="normal"  textLength="17.00" lengthAdjust="spacingAndGlyphs">locked</text>
<line x1="803.7" y1="558.0300000000001" x2="808.5" y2="558.0300000000001" stroke="#1a1a1a" stroke-width="1.6"/>
<text x="799" y="570.86" font-size="6.5" text-anchor="end" fill="#333333" font-weight="normal"  textLength="21.89" lengthAdjust="spacingAndGlyphs">overflow</text>
<line x1="803.7" y1="568.36" x2="808.5" y2="568.36" stroke="#1a1a1a" stroke-width="1.6"/>
<text x="799" y="581.19" font-size="6.5" text-anchor="end" fill="#333333" font-weight="normal"  textLength="25.50" lengthAdjust="spacingAndGlyphs">underflow</text>
<line x1="803.7" y1="578.69" x2="808.5" y2="578.69" stroke="#1a1a1a" stroke-width="1.6"/>
<text x="799" y="591.5200000000001" font-size="6.5" text-anchor="end" fill="#333333" font-weight="normal"  textLength="49.69" lengthAdjust="spacingAndGlyphs">fifo_read_level[5:0]</text>
<line x1="803.7" y1="589.0200000000001" x2="808.5" y2="589.0200000000001" stroke="#1a1a1a" stroke-width="2"/>
<text x="799" y="601.85" font-size="6.5" text-anchor="end" fill="#333333" font-weight="normal"  textLength="30.40" lengthAdjust="spacingAndGlyphs">status[31:0]</text>
<line x1="803.7" y1="599.35" x2="808.5" y2="599.35" stroke="#1a1a1a" stroke-width="2"/>
<text x="799" y="612.1800000000001" font-size="6.5" text-anchor="end" fill="#333333" font-weight="normal"  textLength="35.31" lengthAdjust="spacingAndGlyphs">sof_state_out</text>
<line x1="803.7" y1="609.6800000000001" x2="808.5" y2="609.6800000000001" stroke="#1a1a1a" stroke-width="1.6"/>
<rect x="850.6" y="480.6" width="123.89999999999998" height="70.60000000000002" rx="3.2" ry="3.2" fill="#eaf4fd" stroke="#a9c0dd" stroke-width="1"/>
<text x="911.7" y="478.4" font-size="7" text-anchor="middle" fill="#2a2a2a" font-weight="normal" >rgb2vga_0</text>
<text x="911.7" y="559" font-size="7.4" text-anchor="middle" fill="#5a73aa" font-weight="normal" textLength="44.7" lengthAdjust="spacingAndGlyphs">rgb2vga_v1_0</text>
<text x="854" y="497.8" font-size="6.5" text-anchor="start" fill="#333333" font-weight="normal"  textLength="42.17" lengthAdjust="spacingAndGlyphs">rgb_pData[23:0]</text>
<line x1="845" y1="495.3" x2="850.6" y2="495.3" stroke="#1a1a1a" stroke-width="2"/>
<text x="854" y="508.2" font-size="6.5" text-anchor="start" fill="#333333" font-weight="normal"  textLength="27.13" lengthAdjust="spacingAndGlyphs">rgb_pVDE</text>
<line x1="845" y1="505.7" x2="850.6" y2="505.7" stroke="#1a1a1a" stroke-width="1.6"/>
<text x="854" y="518.7" font-size="6.5" text-anchor="start" fill="#333333" font-weight="normal"  textLength="32.36" lengthAdjust="spacingAndGlyphs">rgb_pHSync</text>
<line x1="845" y1="516.2" x2="850.6" y2="516.2" stroke="#1a1a1a" stroke-width="1.6"/>
<text x="854" y="529.2" font-size="6.5" text-anchor="start" fill="#333333" font-weight="normal"  textLength="32.03" lengthAdjust="spacingAndGlyphs">rgb_pVSync</text>
<line x1="845" y1="526.7" x2="850.6" y2="526.7" stroke="#1a1a1a" stroke-width="1.6"/>
<text x="854" y="539.7" font-size="6.5" text-anchor="start" fill="#333333" font-weight="normal"  textLength="21.24" lengthAdjust="spacingAndGlyphs">PixelClk</text>
<line x1="845" y1="537.2" x2="850.6" y2="537.2" stroke="#1a1a1a" stroke-width="1.6"/>
<circle cx="911.7" cy="516" r="6.7" fill="#b3cbd6"/>
<rect x="904.7" y="513" width="14" height="6.1" fill="#eef6fb"/>
<text x="905.5" y="518.1" font-size="5.4" fill="#34507e" font-weight="bold" textLength="12.3" lengthAdjust="spacing">RTL</text>
<text x="970.5" y="497.6" font-size="6.5" text-anchor="end" fill="#333333" font-weight="normal"  textLength="38.25" lengthAdjust="spacingAndGlyphs">vga_pRed[3:0]</text>
<line x1="974.5" y1="495.1" x2="980" y2="495.1" stroke="#1a1a1a" stroke-width="2"/>
<text x="970.5" y="508.4" font-size="6.5" text-anchor="end" fill="#333333" font-weight="normal"  textLength="43.80" lengthAdjust="spacingAndGlyphs">vga_pGreen[3:0]</text>
<line x1="974.5" y1="505.9" x2="980" y2="505.9" stroke="#1a1a1a" stroke-width="2"/>
<text x="970.5" y="518.5" font-size="6.5" text-anchor="end" fill="#333333" font-weight="normal"  textLength="39.23" lengthAdjust="spacingAndGlyphs">vga_pBlue[3:0]</text>
<line x1="974.5" y1="516" x2="980" y2="516" stroke="#1a1a1a" stroke-width="2"/>
<text x="970.5" y="529.1" font-size="6.5" text-anchor="end" fill="#333333" font-weight="normal"  textLength="33.34" lengthAdjust="spacingAndGlyphs">vga_pHSync</text>
<line x1="974.5" y1="526.6" x2="980" y2="526.6" stroke="#1a1a1a" stroke-width="1.6"/>
<text x="970.5" y="539.5" font-size="6.5" text-anchor="end" fill="#333333" font-weight="normal"  textLength="33.01" lengthAdjust="spacingAndGlyphs">vga_pVSync</text>
<line x1="974.5" y1="537" x2="980" y2="537" stroke="#1a1a1a" stroke-width="1.6"/>
<rect x="8.55" y="6.9" width="1066" height="936.55" fill="none" stroke="#3e75cf" stroke-width="2.7"/>
</svg></body></html>
